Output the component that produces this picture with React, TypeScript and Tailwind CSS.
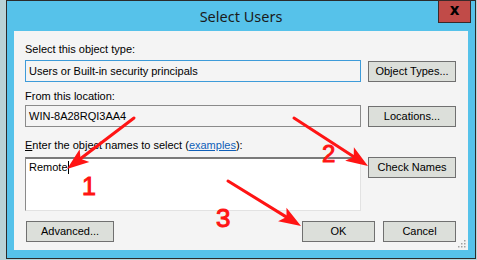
import React from "react";

function Arrow({ x1, y1, x2, y2 }: { x1: number; y1: number; x2: number; y2: number }) {
  const dx = x2 - x1;
  const dy = y2 - y1;
  const len = Math.sqrt(dx * dx + dy * dy);
  const ux = dx / len;
  const uy = dy / len;
  const L = 22;
  const W = 8;
  const bx = x2 - ux * L;
  const by = y2 - uy * L;
  const px = -uy;
  const py = ux;
  const pts = `${x2},${y2} ${bx + px * W},${by + py * W} ${bx + ux * 5},${by + uy * 5} ${bx - px * W},${by - py * W}`;
  return (
    <g>
      <line x1={x1} y1={y1} x2={bx + ux * 6} y2={by + uy * 6} stroke="#ff1414" strokeWidth={3} strokeLinecap="round" />
      <polygon points={pts} fill="#ff1414" />
    </g>
  );
}

const btn =
  "h-[21px] border border-[#707070] bg-[#dcdfda] text-[11px] text-black flex items-center justify-center leading-none";

export default function App() {
  return (
    <div
      className="relative w-[477px] h-[260px] overflow-hidden bg-[#b9d2d6] flex"
      style={{ fontFamily: '"Liberation Sans", Arial, sans-serif' }}
    >
      <div className="ml-[6px] w-[470px] h-[259px] border border-[#2b2b2b] bg-[#56c2ea] flex flex-col">
        {/* title bar */}
        <div className="relative h-[30px] flex items-center justify-center">
          <span
            className="text-[14.5px] text-[#1b1b1b] mt-[2px]"
            style={{ fontFamily: '"Noto Sans", "Open Sans", sans-serif' }}
          >
            Select Users
          </span>
          <div className="absolute right-[4px] top-[-1px] w-[33px] h-[23px] bg-[#c14b48] border border-[#3a2a2a] flex items-center justify-center">
            <span className="text-[15px] font-bold text-black leading-none mb-[2px]" style={{ fontFamily: '"DejaVu Sans", sans-serif' }}>
              x
            </span>
          </div>
        </div>
        {/* panel */}
        <div className="ml-[7px] w-[454px] h-[219px] bg-[#f4f4f4] flex flex-col pl-[11px] text-[11px] leading-[13px] text-black relative">
          <div className="mt-[12px]">Select this object type:</div>
          <div className="mt-[4px] flex">
            <div className="w-[336px] h-[22px] border border-[#3d9bd9] bg-[#f4f4f4] flex items-center pl-[3px]">
              Users or Built-in security principals
            </div>
            <div className={`${btn} ml-[7px] mt-[1px] w-[88px]`}>Object Types...</div>
          </div>
          <div className="mt-[8px]">From this location:</div>
          <div className="mt-[2px] flex">
            <div className="w-[336px] h-[22px] border border-[#8a8a8a] bg-[#f4f4f4] flex items-center pl-[3px]">
              WIN-8A28RQI3AA4
            </div>
            <div className={`${btn} ml-[7px] mt-[1px] w-[88px]`}>Locations...</div>
          </div>
          <div className="mt-[12px]">
            <span className="underline">E</span>nter the object names to select (
            <span className="text-[#0f5fb8] underline">examples</span>):
          </div>
          <div className="mt-[5px] flex">
            <div className="w-[336px] h-[54px] border-t-2 border-l border-t-[#7a7a7a] border-l-[#8a8a8a] border-r border-b border-r-[#e2e2e2] border-b-[#e2e2e2] bg-white pl-[3px] pt-[2px]">
              <span>Remote</span>
              <span className="inline-block w-[1px] h-[13px] bg-black align-top" />
            </div>
            <div className={`${btn} ml-[7px] w-[88px]`}>Check Names</div>
          </div>
          <div className="mt-[10px] flex">
            <div className={`${btn} w-[88px] ml-[1px]`}>Advanced...</div>
            <div className={`${btn} w-[73px] ml-[188px] border-[#2d6eb3]`}>OK</div>
            <div className={`${btn} w-[73px] ml-[8px]`}>Cancel</div>
          </div>
          {/* size grip */}
          <svg className="absolute right-[2px] bottom-[2px]" width="9" height="9" viewBox="0 0 9 9">
            {[
              [7, 1],
              [4, 4],
              [7, 4],
              [1, 7],
              [4, 7],
              [7, 7],
            ].map(([x, y], i) => (
              <rect key={i} x={x} y={y} width="1.5" height="1.5" fill="#a0a0a0" />
            ))}
          </svg>
        </div>
      </div>
      {/* annotations */}
      <svg className="absolute inset-0 pointer-events-none" width="477" height="260" viewBox="0 0 477 260">
        <Arrow x1={134} y1={118} x2={67} y2={169} />
        <Arrow x1={294} y1={118} x2={368} y2={166} />
        <Arrow x1={228} y1={181} x2={301} y2={226} />
        <g fill="#ff1414" stroke="#ff1414" strokeWidth="1" fontFamily="Liberation Sans, Arial, sans-serif">
          <text x="82" y="195" fontSize="25">1</text>
          <text x="322" y="162" fontSize="24">2</text>
          <text x="216" y="227" fontSize="26">3</text>
        </g>
      </svg>
    </div>
  );
}
